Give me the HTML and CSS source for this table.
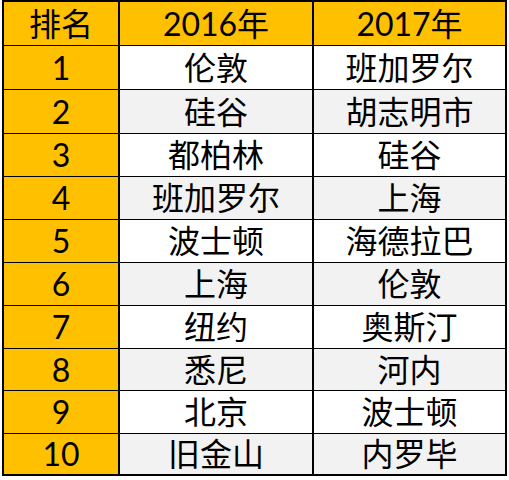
FILE: index.html
```html
<!DOCTYPE html>
<html lang="zh-CN">
<head>
<meta charset="utf-8">
<link rel="stylesheet" href="styles.css">
</head>
<body>
<div class="sheet">
  <div class="cell head">排名</div><div class="cell head">2016年</div><div class="cell head">2017年</div>
  <div class="cell rank">1</div><div class="cell">伦敦</div><div class="cell">班加罗尔</div>
  <div class="cell rank">2</div><div class="cell alt">硅谷</div><div class="cell alt">胡志明市</div>
  <div class="cell rank">3</div><div class="cell">都柏林</div><div class="cell">硅谷</div>
  <div class="cell rank">4</div><div class="cell alt">班加罗尔</div><div class="cell alt">上海</div>
  <div class="cell rank">5</div><div class="cell">波士顿</div><div class="cell">海德拉巴</div>
  <div class="cell rank">6</div><div class="cell alt">上海</div><div class="cell alt">伦敦</div>
  <div class="cell rank">7</div><div class="cell">纽约</div><div class="cell">奥斯汀</div>
  <div class="cell rank">8</div><div class="cell alt">悉尼</div><div class="cell alt">河内</div>
  <div class="cell rank">9</div><div class="cell">北京</div><div class="cell">波士顿</div>
  <div class="cell rank">10</div><div class="cell alt">旧金山</div><div class="cell alt">内罗毕</div>
</div>
</body>
</html>
```

FILE: styles.css
```css
html, body {
  margin: 0;
  padding: 0;
  background: #ffffff;
}

.sheet {
  margin-left: 2px;
  width: 505px;
  box-sizing: border-box;
  display: grid;
  grid-template-columns: 114px 192px 191px;
  grid-template-rows: 43px 43px 43px 42px 42px 42px 42px 42px 41px 42px 40px;
  column-gap: 2px;
  row-gap: 1px;
  padding: 2px;
  background: #000000;
  font-family: Lato, "Noto Sans CJK SC", sans-serif;
  font-size: 32px;
  color: #000000;
}

.cell {
  background: #ffffff;
  display: flex;
  align-items: center;
  justify-content: center;
  line-height: 1;
}

.head,
.rank {
  background: #ffc000;
}

.alt {
  background: #f2f2f2;
}
```
